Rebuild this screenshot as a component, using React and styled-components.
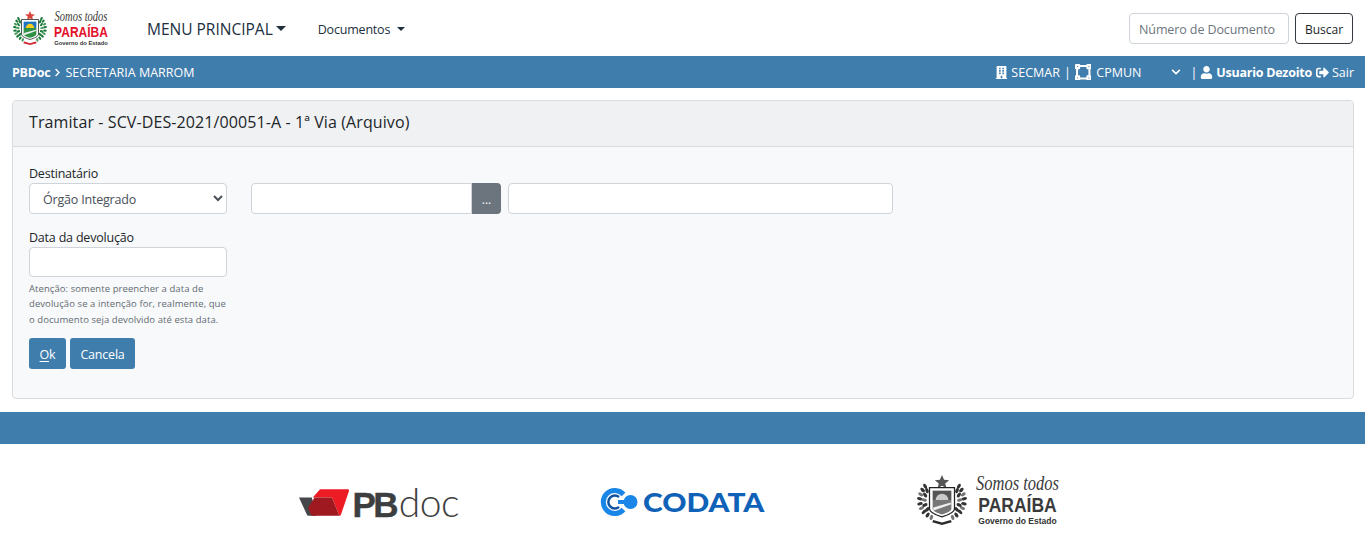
import React from "react";
import styled, { createGlobalStyle } from "styled-components";
import { FaBuilding, FaVectorSquare, FaChevronDown, FaChevronRight, FaUser, FaSignOutAlt } from "react-icons/fa";

const BLUE = "#3f7dad";
const UI_FONT = `"Open Sans", "Noto Sans", "Liberation Sans", sans-serif`;

const GlobalStyle = createGlobalStyle`
    html, body {
        margin: 0;
        padding: 0;
        background: #fff;
        font-family: ${UI_FONT};
        font-size: 13px;
        color: #212529;
    }
    * { box-sizing: border-box; }
`;

const Navbar = styled.header`
    height: 56px;
    display: flex;
    align-items: center;
    padding: 0 12px 0 13px;
    background: #fff;
`;

const NavLink = styled.a`
    display: flex;
    align-items: center;
    padding-top: ${(p) => p.$top}px;
    color: #212f3d;
    font-size: ${(p) => p.$size}px;
    margin-left: ${(p) => p.$left}px;
    letter-spacing: ${(p) => p.$spacing || 0}px;
`;

const Caret = styled.span`
    display: inline-block;
    margin-left: ${(p) => p.$gap}px;
    border-top: ${(p) => p.$size}px solid #212f3d;
    border-left: ${(p) => p.$size}px solid transparent;
    border-right: ${(p) => p.$size}px solid transparent;
`;

const SearchForm = styled.form`
    display: flex;
    gap: 6px;
    margin: 0 0 0 auto;
`;

const SearchInput = styled.input`
    width: 160px;
    height: 31px;
    padding: 3px 9px 0;
    border: 1px solid #ced4da;
    border-radius: 4px;
    font: 12.5px ${UI_FONT};
    letter-spacing: -0.1px;
    &::placeholder { color: #6c757d; opacity: 1; }
`;

const SearchButton = styled.button`
    width: 58px;
    height: 31px;
    padding: 3px 0 0;
    background: #fff;
    border: 1px solid #343a40;
    border-radius: 4px;
    color: #212529;
    font: 12px ${UI_FONT};
`;

const InfoBar = styled.div`
    height: 32px;
    background: ${BLUE};
    color: #fff;
    display: flex;
    align-items: center;
    padding: 0 11px 0 12px;
    font-size: 12.5px;
    svg { flex: none; }
`;

const Strong = styled.strong`
    font-weight: 700;
    letter-spacing: -0.25px;
`;

const InfoGroup = styled.div`
    display: flex;
    align-items: center;
    margin-left: auto;
`;

const InfoText = styled.span`
    margin-left: ${(p) => p.$left || 0}px;
    white-space: nowrap;
`;

const Main = styled.main`
    padding: 12px 11px 13px 12px;
`;

const Card = styled.section`
    height: 299px;
    background: #f8f9fa;
    border: 1px solid #d9dbdd;
    border-radius: 4px;
`;

const CardHeader = styled.h1`
    height: 46px;
    margin: 0;
    padding: 0 16px 3px;
    display: flex;
    align-items: center;
    background: #f0f1f3;
    border-bottom: 1px solid #d9dbdd;
    border-radius: 3px 3px 0 0;
    color: #212529;
    font-size: 16px;
    font-weight: 500;
    letter-spacing: 0.1px;
`;

const CardBody = styled.div`
    padding: 18px 16px 0;
`;

const FormRow = styled.div`
    display: flex;
    align-items: flex-end;
    gap: 7px;
`;

const Field = styled.div`
    width: 198px;
    margin-right: 17px;
`;

const Label = styled.label`
    display: block;
    height: 18px;
    line-height: 18px;
    font-size: 12.5px;
    letter-spacing: -0.2px;
    color: #212529;
`;

const Select = styled.select`
    display: block;
    width: 100%;
    height: 31px;
    padding: 2px 0 0 9px;
    background: #fff;
    border: 1px solid #ced4da;
    border-radius: 4px;
    color: #495057;
    font: 12.5px ${UI_FONT};
    letter-spacing: -0.2px;
`;

const TextInput = styled.input`
    display: block;
    width: ${(p) => p.$width || "100%"};
    height: ${(p) => p.$height || 31}px;
    background: #fff;
    border: 1px solid #ced4da;
    border-radius: 4px;
`;

const InputGroup = styled.div`
    display: flex;
    width: 250px;
`;

const GroupInput = styled(TextInput)`
    flex: 1;
    min-width: 0;
    border-radius: 4px 0 0 4px;
`;

const MoreButton = styled.button`
    width: 29px;
    height: 31px;
    padding: 2px 0 0;
    background: #6c757d;
    border: 0;
    border-radius: 0 4px 4px 0;
    color: #fff;
    font: 12px ${UI_FONT};
`;

const DateField = styled.div`
    width: 198px;
    margin-top: 15px;
`;

const Help = styled.small`
    display: block;
    margin-top: 4px;
    color: #626b73;
    font-size: 9.5px;
    line-height: 15.4px;
    letter-spacing: 0.07px;
`;

const Actions = styled.div`
    display: flex;
    gap: 4px;
    margin-top: 11px;
`;

const Button = styled.button`
    height: 31px;
    width: ${(p) => p.$width}px;
    padding: 1px 0 0;
    background: ${BLUE};
    border: 0;
    border-radius: 3px;
    color: #fff;
    font: 12.5px ${UI_FONT};
    letter-spacing: -0.2px;
    u { text-underline-offset: 2px; }
`;

const FooterBar = styled.div`
    height: 32px;
    background: ${BLUE};
`;

const Logos = styled.footer`
    height: 104px;
    padding: 12px 8px 0 0;
    display: flex;
    justify-content: center;
    align-items: center;
`;

const LogoSlot = styled.div`
    display: flex;
    align-items: center;
    flex: none;
    width: ${(p) => p.$width}px;
    margin: ${(p) => p.$top || 0}px 0 0 ${(p) => p.$left || 0}px;
`;

const LEAVES = [
    [6.5, 9, -30], [4.5, 12, -45], [3, 15.500, -60], [2.200, 19, -80], [2.400, 23, 80],
    [3.600, 26.500, 65], [5.600, 29.500, 50], [8.500, 32, 35], [11.500, 34, 20],
    [8, 12.500, -20], [6.500, 16, -35], [5.800, 20, -80], [6.300, 24, 70], [8.300, 27.500, 45],
];

// brasao da Paraiba, desenho simplificado usado nas duas marcas
function Crest({ gray }) {
    const green = gray ? "#333" : "#1c7a3a";
    const blue = gray ? "#555" : "#1f74c4";
    const yellow = gray ? "#c9c9c9" : "#f4cc1c";
    const field = gray ? "#777" : "#2f9145";
    const red = gray ? "#2b2b2b" : "#cf2330";
    const line = gray ? "#222" : "#2c3a33";
    return (
        <svg width="100%" height="100%" viewBox="0 0 40 40">
            <path d="M20 0l1.700 3.800 4 .3-3.100 2.600 1 3.900-3.600-2.100-3.600 2.100 1-3.900-3.100-2.600 4-.3z" fill={gray ? "#555" : "#d8453f"} />
            {LEAVES.map(([x, y, r], i) => (
                <g key={i} fill={i % 3 === 2 ? (gray ? "#777" : "#4a9d5f") : green}>
                    <ellipse cx={x} cy={y} rx="1.300" ry="2.200" transform={`rotate(${r} ${x} ${y})`} />
                    <ellipse cx={40 - x} cy={y} rx="1.300" ry="2.200" transform={`rotate(${-r} ${40 - x} ${y})`} />
                </g>
            ))}
            <path d="M10 10h20v17c0 3-5 5-10 6.500C15 32 10 30 10 27z" fill="#fff" stroke={line} strokeWidth="1" />
            <path d="M12.500 12.500h15V20h-15z" fill={blue} />
            <path d="M15 20a5 5 0 0 1 10 0z" fill={yellow} />
            <path d="M12.500 20h15v7c0 2-4 3.500-7.500 4.500-3.500-1-7.500-2.500-7.500-4.500z" fill={field} />
            <path d="M13 26l14-4v1.500l-14 5z" fill="#eee" />
            <path d="M13 36l7 2 7-2 .8 1.800L20 40l-7.800-2.200z" fill={red} />
        </svg>
    );
}

const GovLogo = styled.div`
    display: flex;
    align-items: center;
    gap: ${(p) => p.$gap}px;
`;

const CrestBox = styled.div`
    flex: none;
    width: ${(p) => p.$size}px;
    height: ${(p) => p.$size}px;
`;

const GovWords = styled.div`
    display: flex;
    flex-direction: column;
    align-items: center;
    width: ${(p) => p.$width}px;
    font-family: "Liberation Sans", sans-serif;
`;

const Script = styled.span`
    font: italic 400 ${(p) => p.$size}px/${(p) => p.$line}px "Liberation Serif", serif;
    color: #3a3a3a;
    white-space: nowrap;
    transform: scaleY(${(p) => p.$stretch});
`;

const StateName = styled.span`
    font-weight: 700;
    font-size: ${(p) => p.$size}px;
    line-height: ${(p) => p.$line}px;
    color: ${(p) => p.$color};
    transform: scaleY(1.2);
    white-space: nowrap;
`;

const Gov = styled.span`
    font-weight: 700;
    font-size: ${(p) => p.$size}px;
    line-height: ${(p) => p.$line}px;
    color: #333;
    white-space: nowrap;
`;

const PbWord = styled.div`
    display: flex;
    align-items: baseline;
    margin-left: 3px;
    font-family: "Liberation Sans", sans-serif;
    color: #3d3e40;
    font-size: 35px;
    line-height: 36px;
`;

const PbBold = styled.span`
    font-weight: 700;
    letter-spacing: -2.6px;
    -webkit-text-stroke: 0.4px #3d3e40;
`;

const PbThin = styled.span`
    font-family: "Lato", sans-serif;
    font-weight: 300;
    font-size: 39px;
    letter-spacing: -0.5px;
    margin-left: 3px;
`;

const CodataWord = styled.span`
    font-family: "Lato", sans-serif;
    font-weight: 900;
    font-size: 26px;
    line-height: 30px;
    color: #0f62b8;
    margin-left: 5px;
    transform: scaleX(1.15);
    transform-origin: left center;
`;

function PbdocLogo() {
    return (
        <LogoSlot $width={160} $top={2}>
            <svg width="55" height="30" viewBox="0 0 55 30">
                <path d="M0 9h14l5 20H11c-1.500 0-2.200-.5-2.700-2z" fill="#45474a" />
                <path d="M23 0h30c1.500 0 2 .7 1.500 2L46 27c-.5 1.500-1 2-2 2L36 9H15z" fill="#ed1c24" />
                <path d="M17 9h19l8 20H16c-2 0-3-.5-3.500-2L10 20z" fill="#9e1a20" />
            </svg>
            <PbWord>
                <PbBold>PB</PbBold>
                <PbThin>doc</PbThin>
            </PbWord>
        </LogoSlot>
    );
}

function CodataLogo() {
    return (
        <LogoSlot $width={167} $left={141}>
            <svg width="38" height="28" viewBox="0 0 38 28">
                <path d="M23.500 6.500A11.500 11.500 0 1 0 23.500 21.500" fill="none" stroke="#1a86e8" strokeWidth="5" />
                <path d="M19 9a6.500 6.500 0 1 0 0 10" fill="none" stroke="#0f52a0" strokeWidth="2.500" />
                <circle cx="30.500" cy="14" r="7" fill="#1a86e8" />
                <path d="M18 14h8" stroke="#1a86e8" strokeWidth="4" />
            </svg>
            <CodataWord>CODATA</CodataWord>
        </LogoSlot>
    );
}

function FooterGov() {
    return (
        <LogoSlot $width={141} $left={150} $top={-5}>
            <GovLogo $gap={10}>
                <CrestBox $size={50}>
                    <Crest gray />
                </CrestBox>
                <GovWords $width={81}>
                    <Script $size={16.500} $line={21} $stretch={1.25}>Somos todos</Script>
                    <StateName $size={17.500} $line={22} $color="#3a3a3a">PARAÍBA</StateName>
                    <Gov $size={8.500} $line={11}>Governo do Estado</Gov>
                </GovWords>
            </GovLogo>
        </LogoSlot>
    );
}

export default function App() {
    return (
        <>
            <GlobalStyle />
            <Navbar>
                <LogoSlot $width={95}>
                    <GovLogo $gap={7}>
                        <CrestBox $size={34}>
                            <Crest />
                        </CrestBox>
                        <GovWords $width={54}>
                            <Script $size={10.500} $line={14} $stretch={1.3}>Somos todos</Script>
                            <StateName $size={12} $line={16} $color="#e3102a">PARAÍBA</StateName>
                            <Gov $size={5.800} $line={7}>Governo do Estado</Gov>
                        </GovWords>
                    </GovLogo>
                </LogoSlot>
                <NavLink $size={15.500} $left={39} $top={1}>
                    MENU PRINCIPAL<Caret $gap={3} $size={5} />
                </NavLink>
                <NavLink $size={12.500} $left={32} $spacing={-0.2} $top={2}>
                    Documentos<Caret $gap={7} $size={4} />
                </NavLink>
                <SearchForm>
                    <SearchInput placeholder="Número de Documento" />
                    <SearchButton type="button">Buscar</SearchButton>
                </SearchForm>
            </Navbar>
            <InfoBar>
                <Strong>PBDoc</Strong>
                <FaChevronRight size={9} style={{ margin: "0 3px 0 3px" }} />
                <span>SECRETARIA MARROM</span>
                <InfoGroup>
                    <FaBuilding size={13} />
                    <InfoText $left={3}>SECMAR</InfoText>
                    <InfoText $left={4}>|</InfoText>
                    <FaVectorSquare size={16.5} style={{ marginLeft: 4 }} />
                    <InfoText $left={5}>CPMUN</InfoText>
                    <FaChevronDown size={10} style={{ marginLeft: 30 }} />
                    <InfoText $left={9}>|</InfoText>
                    <FaUser size={13} style={{ marginLeft: 3 }} />
                    <InfoText $left={3}><Strong>Usuario Dezoito</Strong></InfoText>
                    <FaSignOutAlt size={13} style={{ marginLeft: 4 }} />
                    <InfoText $left={3}>Sair</InfoText>
                </InfoGroup>
            </InfoBar>
            <Main>
                <Card>
                    <CardHeader>Tramitar - SCV-DES-2021/00051-A - 1ª Via (Arquivo)</CardHeader>
                    <CardBody>
                        <FormRow>
                            <Field>
                                <Label>Destinatário</Label>
                                <Select defaultValue="orgao">
                                    <option value="orgao">Órgão Integrado</option>
                                </Select>
                            </Field>
                            <InputGroup>
                                <GroupInput />
                                <MoreButton type="button">...</MoreButton>
                            </InputGroup>
                            <TextInput $width="385px" />
                        </FormRow>
                        <DateField>
                            <Label>Data da devolução</Label>
                            <TextInput $height={30} />
                            <Help>
                                Atenção: somente preencher a data de devolução se a intenção for, realmente, que o documento seja devolvido até esta data.
                            </Help>
                        </DateField>
                        <Actions>
                            <Button type="button" $width={37}><u>O</u>k</Button>
                            <Button type="button" $width={65}>Cancela</Button>
                        </Actions>
                    </CardBody>
                </Card>
            </Main>
            <FooterBar />
            <Logos>
                <PbdocLogo />
                <CodataLogo />
                <FooterGov />
            </Logos>
        </>
    );
}
